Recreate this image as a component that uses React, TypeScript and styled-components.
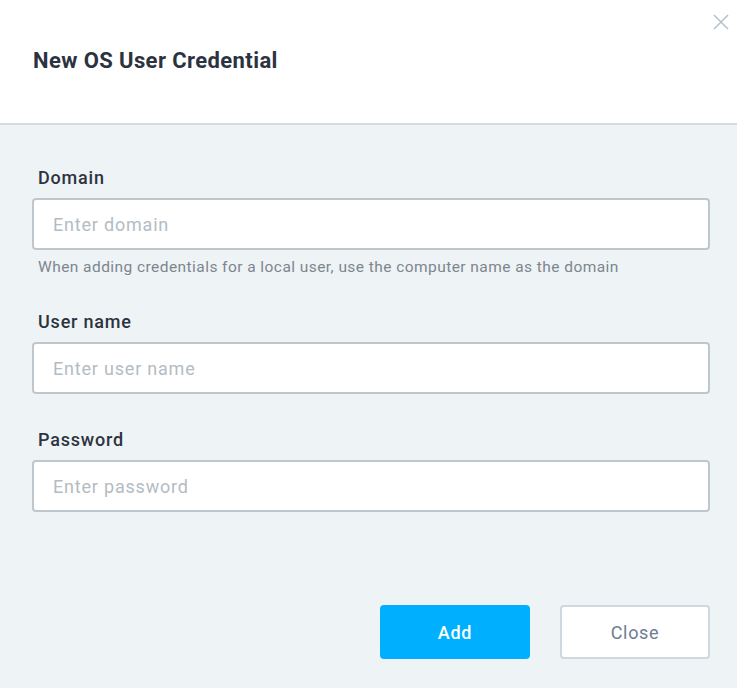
import React from "react";
import styled, { createGlobalStyle } from "styled-components";

const GlobalStyle = createGlobalStyle`
  html, body {
    margin: 0;
    padding: 0;
    background: #eef3f6;
    font-family: Roboto, "Liberation Sans", sans-serif;
  }
  * { box-sizing: border-box; }
`;

const Dialog = styled.div`
  width: 737px;
  height: 688px;
  display: flex;
  flex-direction: column;
  background: #eef3f6;
`;

const Header = styled.div`
  position: relative;
  height: 125px;
  flex-shrink: 0;
  background: #ffffff;
  border-bottom: 2px solid #d5dbe1;
  padding: 48px 33px 0;
`;

const Title = styled.h1`
  margin: 0;
  font-size: 22px;
  line-height: 25px;
  font-weight: 700;
  color: #2c3340;
  letter-spacing: 0.4px;
`;

const CloseIcon = styled.button`
  position: absolute;
  top: 14px;
  right: 8px;
  width: 16px;
  height: 16px;
  padding: 0;
  border: none;
  background: transparent;
  cursor: pointer;
  display: flex;
`;

const Body = styled.div`
  flex: 1;
  display: flex;
  flex-direction: column;
  padding: 43px 27px 0 32px;
`;

const Field = styled.div<{ $top?: number }>`
  display: flex;
  flex-direction: column;
  margin-top: ${(p) => p.$top ?? 0}px;
`;

const Label = styled.label`
  font-size: 18px;
  line-height: 20px;
  font-weight: 500;
  letter-spacing: 0.8px;
  color: #2c3340;
  padding-left: 6px;
  margin-bottom: 10px;
`;

const Input = styled.input`
  width: 100%;
  height: 52px;
  border: 2px solid #bfc7cd;
  border-radius: 4px;
  background: #ffffff;
  padding: 0 19px;
  font-family: Roboto, "Liberation Sans", sans-serif;
  font-size: 18px;
  letter-spacing: 0.8px;
  color: #2d333d;
  outline: none;

  &::placeholder {
    color: #b3bcc3;
  }
`;

const Hint = styled.div`
  font-size: 15.5px;
  line-height: 18px;
  letter-spacing: 0.44px;
  color: #7d868e;
  padding-left: 6px;
  margin-top: 8px;
`;

const Footer = styled.div`
  margin-top: auto;
  display: flex;
  justify-content: flex-end;
  gap: 30px;
  padding: 0 27px 29px 0;
`;

const Button = styled.button<{ $primary?: boolean }>`
  width: 150px;
  height: 54px;
  border-radius: 4px;
  font-family: Roboto, "Liberation Sans", sans-serif;
  font-size: 18px;
  letter-spacing: 0.7px;
  font-weight: ${(p) => (p.$primary ? 500 : 400)};
  cursor: pointer;
  border: 2px solid ${(p) => (p.$primary ? "#00b0ff" : "#d1d7de")};
  background: ${(p) => (p.$primary ? "#00b0ff" : "#ffffff")};
  color: ${(p) => (p.$primary ? "#ffffff" : "#6e7d92")};
`;

export default function App() {
  return (
    <>
      <GlobalStyle />
      <Dialog>
        <Header>
          <Title>New OS User Credential</Title>
          <CloseIcon aria-label="close">
            <svg width="16" height="16" viewBox="0 0 16 16">
              <path d="M1 1 L15 15 M15 1 L1 15" stroke="#b7c2cf" strokeWidth="1.6" fill="none" />
            </svg>
          </CloseIcon>
        </Header>
        <Body>
          <Field>
            <Label htmlFor="domain">Domain</Label>
            <Input id="domain" placeholder="Enter domain" />
            <Hint>When adding credentials for a local user, use the computer name as the domain</Hint>
          </Field>
          <Field $top={36}>
            <Label htmlFor="user">User name</Label>
            <Input id="user" placeholder="Enter user name" />
          </Field>
          <Field $top={36}>
            <Label htmlFor="password">Password</Label>
            <Input id="password" type="password" placeholder="Enter password" />
          </Field>
        </Body>
        <Footer>
          <Button $primary>Add</Button>
          <Button>Close</Button>
        </Footer>
      </Dialog>
    </>
  );
}
